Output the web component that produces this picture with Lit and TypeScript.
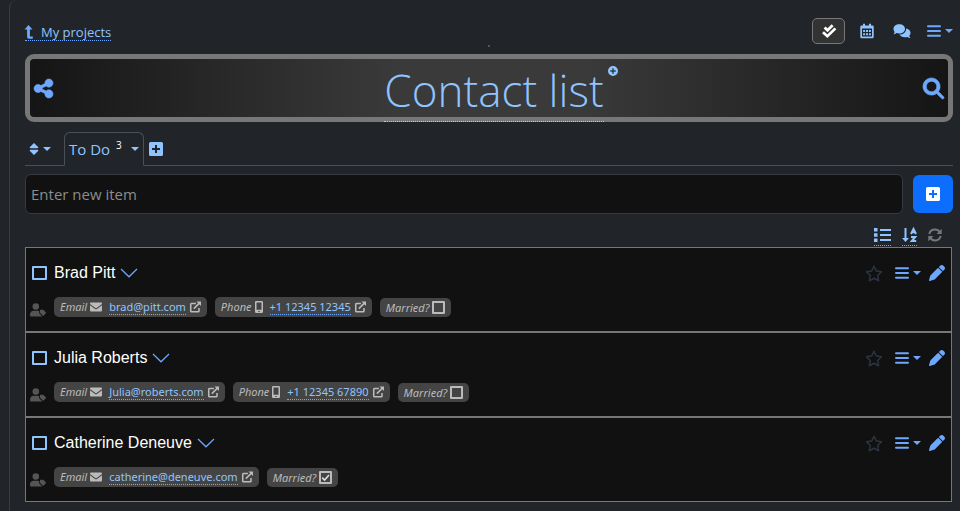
import { LitElement, html, css, svg, nothing } from "lit";
import { customElement, property } from "lit/decorators.js";

const shapes = {
  share: { box: "0 0 448 512", art: svg`<path stroke="currentColor" stroke-width="14" d="M352 224c53 0 96-43 96-96s-43-96-96-96s-96 43-96 96c0 4 .2 8 .7 11.9l-94.1 47C145.4 170.2 121.9 160 96 160c-53 0-96 43-96 96s43 96 96 96c25.9 0 49.4-10.2 66.6-26.9l94.1 47c-.5 3.9-.7 7.8-.7 11.9c0 53 43 96 96 96s96-43 96-96s-43-96-96-96c-25.9 0-49.4 10.2-66.6 26.9l-94.1-47c.5-3.9 .7-7.8 .7-11.9s-.2-8-.7-11.9l94.1-47C302.6 213.8 326.1 224 352 224z"/>` },
  search: { box: "0 0 512 512", art: svg`<path d="M416 208c0 45.9-14.9 88.3-40 122.7L502.6 457.4c12.5 12.5 12.5 32.8 0 45.3s-32.8 12.5-45.3 0L330.7 376c-34.4 25.2-76.8 40-122.7 40C93.1 416 0 322.9 0 208S93.1 0 208 0S416 93.1 416 208zM208 336a128 128 0 1 0 0-256 128 128 0 1 0 0 256z" stroke="currentColor" stroke-width="16"/>` },
  pencil: { box: "0 0 512 512", art: svg`<path d="M410.3 231l11.3-11.3-33.9-33.9-62.1-62.1L291.7 89.8l-11.3 11.3-22.6 22.6L58.6 322.9c-10.4 10.4-18 23.3-22.2 37.4L1 480.7c-2.5 8.4-.2 17.5 6.1 23.7s15.3 8.5 23.7 6.1l120.3-35.4c14.1-4.2 27-11.8 37.4-22.2L387.7 253.7 410.3 231zM362.7 18.7L348.3 33.2 325.7 55.8 314.3 67.1l33.9 33.9 62.1 62.1 33.9 33.9 11.3-11.3 22.6-22.6 14.5-14.5c25-25 25-65.5 0-90.5L453.3 18.7c-25-25-65.5-25-90.5 0z"/>` },
  star: { box: "0 0 576 512", art: svg`<path d="M287.9 0c9.2 0 17.6 5.2 21.6 13.5l68.6 141.3 153.2 22.6c9 1.3 16.5 7.6 19.3 16.3s.5 18.1-5.9 24.5L433.6 328.4l26.2 155.6c1.5 9-2.2 18.1-9.7 23.5s-17.3 6-25.3 1.7l-137-73.2L151 509.1c-8.1 4.3-17.9 3.7-25.3-1.7s-11.2-14.5-9.7-23.5l26.2-155.6L31.1 218.2c-6.5-6.4-8.7-15.9-5.9-24.5s10.3-14.9 19.3-16.3l153.2-22.6L266.3 13.5C270.4 5.2 278.7 0 287.9 0zm0 79L235.4 187.2c-3.5 7.1-10.2 12.1-18.1 13.3L99 217.9 184.9 303c5.5 5.5 8.1 13.3 6.8 21L171.4 443.7l105.2-56.2c7.1-3.8 15.6-3.8 22.6 0l105.2 56.2L384.2 324.1c-1.3-7.7 1.2-15.5 6.8-21l85.9-85.1L358.6 200.5c-7.8-1.2-14.6-6.1-18.1-13.3L287.9 79z"/>` },
  up: { box: "0 0 8 14", art: svg`<path d="M3.5 0 7.5 4.5H4.9V11.4H7.8V13.8H4Q2.1 13.8 2.1 12V4.5H-.5Z"/>` },
  checks: { box: "0 0 16 16", art: svg`<path d="M3.6 4.6 6.5 7.3 11.6 2.2M2 9.2 6.4 13.2 14.4 5.4" fill="none" stroke="currentColor" stroke-width="2.7"/>` },
  calendar: { box: "0 0 14 16", art: svg`<path fill-rule="evenodd" d="M3 .8H5V2.4H9V.8H11V2.4H12.5Q13.7 2.4 13.7 3.6V14Q13.7 15.2 12.5 15.2H1.5Q.3 15.2.3 14V3.6Q.3 2.4 1.5 2.4H3ZM2 5.6V13.5H12V5.6Z"/><path d="M3.1 7h2v2h-2zM6 7h2v2H6zM8.9 7h2v2h-2zM3.1 10.2h2v2h-2zM6 10.2h2v2H6zM8.9 10.2h2v2h-2z"/>` },
  chat: { box: "0 0 18 16", art: svg`<path d="M6.3 1.3C9.6 1.3 12 3.3 12 5.9S9.6 10.5 6.3 10.5C5.3 10.5 4.4 10.3 3.6 10 2.6 10.8 1.4 11.2.4 11.2 1 10.6 1.5 9.9 1.6 8.9.9 8.1.5 7 .5 5.9 .5 3.3 3 1.3 6.3 1.3Z"/><path d="M13 5.4C15.7 5.8 17.5 7.5 17.5 9.7 17.5 10.9 17 11.9 16.3 12.7 16.4 13.7 16.9 14.4 17.5 15 16.4 15 15.2 14.6 14.3 13.9 13.5 14.2 12.6 14.3 11.8 14.3 9.3 14.3 7.2 13.1 6.4 11.5 10.2 11.5 13.1 9 13.1 5.9Z"/>` },
  bars: { box: "0 0 14 14", art: svg`<path d="M1 1.3H13a1 1 0 0 1 0 2H1a1 1 0 0 1 0-2ZM1 6H13a1 1 0 0 1 0 2H1a1 1 0 0 1 0-2ZM1 10.7H13a1 1 0 0 1 0 2H1a1 1 0 0 1 0-2Z"/>` },
  caret: { box: "0 0 8 4", art: svg`<path d="M0 0H8L4 4Z"/>` },
  sort: { box: "0 0 10 12", art: svg`<path d="M5 0 9.3 4.3Q9.5 5.3 8.5 5.3H1.5Q.5 5.3.7 4.3ZM5 12 9.3 7.7Q9.5 6.7 8.5 6.7H1.5Q.5 6.7.7 7.7Z"/>` },
  plus: { box: "0 0 14 14", art: svg`<path fill-rule="evenodd" d="M1.5 0H12.5Q14 0 14 1.5V12.5Q14 14 12.5 14H1.5Q0 14 0 12.5V1.5Q0 0 1.5 0ZM6 3V6H3V8H6V11H8V8H11V6H8V3Z"/>` },
  roundPlus: { box: "0 0 10 10", art: svg`<path fill-rule="evenodd" d="M5 0A5 5 0 0 1 5 10A5 5 0 0 1 5 0ZM4.3 2.3V4.3H2.3V5.7H4.3V7.7H5.7V5.7H7.7V4.3H5.7V2.3Z"/>` },
  list: { box: "0 0 17 14", art: svg`<path d="M0 0H3.500V3.500H0ZM0 5.200H3.500V8.700H0ZM0 10.400H3.500V13.900H0ZM6 1H17V3H6ZM6 6H17V8H6ZM6 11H17V13H6Z"/>` },
  az: { box: "0 0 15 14", art: svg`<path d="M2.5 0H4.5V10H7L3.5 14 0 10H2.5Z"/><path fill="none" stroke="currentColor" stroke-width="2" d="M9 6 11.5 1 14 6M10 4.3H13M9 9H13.2L9.8 13H14.2"/>` },
  sync: { box: "0 0 14 14", art: svg`<path fill="none" stroke="currentColor" stroke-width="2" d="M1.3 6.1C1.9 3.2 4.2 1.6 7 1.6 9.3 1.6 11 2.7 12 4.5M12.7 7.9C12.1 10.8 9.8 12.4 7 12.4 4.7 12.4 3 11.3 2 9.5"/><path d="M13.7.8V6H8.5ZM.3 13.2V8H5.5Z"/>` },
  chevron: { box: "0 0 18 10", art: svg`<path fill="none" stroke="currentColor" stroke-width="1.2" d="M1 1 9 8.8 17 1"/>` },
  userTag: { box: "0 0 16 14", art: svg`<path d="M5.8.2a3.3 3.3 0 1 1 0 6.600a3.300 3.300 0 1 1 0-6.600ZM3.800 7.800H7.800Q9 7.800 9.200 8V10.300L12.300 13.500H1Q0 13.500 0 12.500V11.500Q.2 8 3.800 7.800ZM10.600 6.800H13.200L15.800 9.200Q16.200 9.700 15.800 10.200L13.700 12.500Q13.200 13 12.700 12.500L10 9.800V7.400Q10 6.800 10.600 6.800Z"/>` },
  mail: { box: "0 0 12 10", art: svg`<path d="M1 .5H11Q12 .5 12 1.5V2L6.6 6Q6 6.4 5.4 6L0 2V1.5Q0 .5 1 .5ZM0 3.2 5 6.9Q6 7.5 7 6.9L12 3.2V8.5Q12 9.5 11 9.5H1Q0 9.5 0 8.5Z"/>` },
  phone: { box: "0 0 8 12", art: svg`<path fill-rule="evenodd" d="M1.3 0H6.7Q8 0 8 1.3V10.7Q8 12 6.7 12H1.3Q0 12 0 10.7V1.3Q0 0 1.3 0ZM1.5 1.5V8.8H6.5V1.5ZM3.3 9.9V11H4.7V9.9Z"/>` },
  external: { box: "0 0 12 12", art: svg`<path fill="none" stroke="currentColor" stroke-width="1.7" d="M6.5 2.2H1.6Q.8 2.2.8 3V10.4Q.8 11.2 1.6 11.2H9Q9.8 11.2 9.8 10.4V7M4.2 7.8 10 2"/><path d="M7 0H12V5Z"/>` },
  tick: { box: "0 0 13 13", art: svg`<path fill="none" stroke="currentColor" stroke-width="1.6" d="M3.2 6.6 5.6 9 10 4"/>` },
};
type Shape = keyof typeof shapes;

interface Contact {
  name: string;
  email: string;
  phone?: string;
  married: boolean;
}

const contacts: Contact[] = [
  { name: "Brad Pitt", email: "brad@pitt.com", phone: "+1 12345 12345", married: false },
  { name: "Julia Roberts", email: "Julia@roberts.com", phone: "+1 12345 67890", married: false },
  { name: "Catherine Deneuve", email: "catherine@deneuve.com", married: true },
];

const controls = css`
  * { box-sizing: border-box; }
  button {
    display: inline-flex; align-items: center; justify-content: center; gap: 4px;
    padding: 0; border: 0; background: none; color: inherit; font: inherit; cursor: pointer;
  }
  a { color: #90c4ff; text-decoration: none; }
  .check { appearance: none; flex: none; margin: 0; border: 2px solid currentColor; border-radius: 1px; color: inherit; }
`;

@customElement("ui-icon")
export class UiIcon extends LitElement {
  static styles = css`
    :host { display: inline-flex; flex: none; }
    svg { width: 100%; height: 100%; fill: currentColor; overflow: visible; }
  `;
  @property() name: Shape = "bars";
  render() {
    const s = shapes[this.name];
    return html`<svg viewBox=${s.box} aria-hidden="true">${s.art}</svg>`;
  }
}

@customElement("contact-row")
export class ContactRow extends LitElement {
  static styles = [controls, css`
    :host {
      display: flex; flex-direction: column; gap: 14px; box-sizing: border-box; min-height: 85px; padding: 15px 6px 14px 4px;
      border: 1px solid #777; background: #111; color: #6ea8fe;
    }
    .head { display: flex; align-items: center; height: 20px; }
    .done { width: 15px; height: 14px; margin: 0 7px 0 2px; color: #90c4ff; }
    .name { color: #fff; font: 16px/20px "Liberation Sans", Arial, sans-serif; }
    .open { margin-left: 5px; }
    .open ui-icon { width: 18px; height: 10px; }
    .actions { display: flex; align-items: center; margin-left: auto; }
    .star { color: #2b3440; margin-right: 12px; }
    .star ui-icon { width: 18px; height: 17px; }
    .menu { margin-right: 8px; gap: 4px; }
    .menu .b { width: 14px; height: 14px; }
    .caret { width: 8px; height: 4px; }
    .edit ui-icon { width: 16px; height: 16px; }
    .fields { display: flex; align-items: flex-end; gap: 8px; height: 20px; font: 11px/20px "Noto Sans", sans-serif; }
    .tag { width: 16px; height: 14px; color: #555; }
    .chip {
      display: flex; align-items: center; height: 20px; padding: 0 6px;
      border-radius: 5px; background: #444; color: #bbb; white-space: nowrap;
    }
    .chip em { margin-right: 3px; }
    .chip a { line-height: 14px; border-bottom: 1px dotted #6ea8fe; margin: 0 4px 0 7px; }
    .mail { width: 12px; height: 10px; }
    .phone { width: 8px; height: 12px; }
    .out { width: 11px; height: 12px; }
    .chip.married { height: 19px; }
    .box { display: grid; }
    .box > * { grid-area: 1 / 1; width: 13px; height: 13px; }
    .box ui-icon { color: #ddd; pointer-events: none; }
  `];
  @property({ attribute: false }) contact!: Contact;

  render() {
    const c = this.contact;
    return html`
      <div class="head">
        <input class="check done" id="done" type="checkbox">
        <label class="name" for="done">${c.name}</label>
        <button class="open" aria-label="Show details"><ui-icon name="chevron"></ui-icon></button>
        <div class="actions">
          <button class="star" aria-label="Favourite"><ui-icon name="star"></ui-icon></button>
          <button class="menu" aria-label="Item menu"><ui-icon class="b" name="bars"></ui-icon><ui-icon class="caret" name="caret"></ui-icon></button>
          <button class="edit" aria-label="Edit"><ui-icon name="pencil"></ui-icon></button>
        </div>
      </div>
      <div class="fields">
        <ui-icon class="tag" name="userTag"></ui-icon>
        <span class="chip"><em>Email</em><ui-icon class="mail" name="mail"></ui-icon>
          <a href="mailto:${c.email}">${c.email}</a><ui-icon class="out" name="external"></ui-icon></span>
        ${c.phone ? html`<span class="chip"><em>Phone</em><ui-icon class="phone" name="phone"></ui-icon>
          <a href="tel:${c.phone}">${c.phone}</a><ui-icon class="out" name="external"></ui-icon></span>` : nothing}
        <label class="chip married"><em>Married?</em>
          <span class="box"><input class="check" type="checkbox" .checked=${c.married}>
            ${c.married ? html`<ui-icon name="tick"></ui-icon>` : nothing}
          </span></label>
      </div>`;
  }
}

@customElement("app-root")
export class AppRoot extends LitElement {
  static styles = [controls, css`
    :host {
      display: block; min-height: 100vh; padding-left: 9px; box-sizing: border-box;
      background: #212529; color: #90c4ff; font: 14px/20px "Open Sans", sans-serif;
    }
    .panel {
      min-height: 100vh; padding: 17px 7px 9px 15px;
      border-left: 1px solid #3a3e42; border-top-left-radius: 8px;
    }
    .top { display: grid; grid-template-columns: 1fr auto 1fr; height: 37px; }
    .back { display: flex; justify-self: start; align-items: center; gap: 8px; height: 18px; margin-top: 6px; font-size: 13px; border-bottom: 1px dotted #6ea8fe; }
    .back ui-icon { width: 8px; height: 14px; color: #6ea8fe; }
    .dot { align-self: end; width: 2px; height: 2px; margin-bottom: 7px; background: #555; }
    .tools { display: flex; justify-self: end; align-items: center; height: 28px; }
    .tools .active { width: 33px; height: 26px; margin-right: 15px; border: 1px solid #777; border-radius: 5px; background: #333; color: #fff; }
    .i14 { width: 14px; height: 14px; }
    .i16 { width: 16px; height: 16px; }
    .cal { margin-right: 19px; }
    .cal ui-icon { width: 14px; height: 16px; }
    .chat { margin-right: 16px; }
    .chat ui-icon { width: 18px; height: 16px; }
    .blue { color: #6ea8fe; }
    .caret { width: 8px; height: 4px; }
    .banner {
      display: grid; grid-template-columns: 1fr auto 1fr; align-items: center; height: 68px; padding: 0 4px;
      border: 5px solid #777; border-radius: 9px;
      background: linear-gradient(90deg, #151515, #3a3a3a 40%, #3a3a3a 60%, #151515);
    }
    .search { justify-self: end; color: #6ea8fe; }
    .share { justify-self: start; color: #6ea8fe; }
    .share ui-icon { width: 19px; height: 23px; }
    .search ui-icon { width: 21px; height: 21px; }
    h1 { position: relative; margin: 0 0 0 10px; height: 58px; font: 300 44px/62px "Open Sans", sans-serif; }
    h1 a { display: block; border-bottom: 1px dotted #b7cbe0; }
    h1 button { position: absolute; left: 100%; top: 7px; margin-left: 4px; }
    h1 ui-icon { width: 10px; height: 10px; }
    .tabs { display: flex; align-items: center; height: 34px; margin-top: 10px; border-bottom: 1px solid #495057; }
    .sort { width: 39px; justify-content: flex-start; padding-left: 4px; gap: 4px; }
    .sort .s { width: 10px; height: 12px; }
    .tab { align-self: stretch; display: flex; align-items: center; width: 80px; height: 34px; padding: 0 4px; border: 1px solid #495057; border-bottom-color: #212529; border-radius: 6px 6px 0 0; background: #212529; font-size: 15px; }
    .tab sup { align-self: flex-start; margin: 6px 0 0 6px; color: #fff; font-size: 10px; line-height: 12px; }
    .tab .caret { margin-left: auto; }
    .newtab { margin-left: 5px; }
    .entry { display: grid; grid-template-columns: 1fr 40px; gap: 10px; margin-top: 8px; }
    .entry input { width: 100%; height: 40px; padding: 0 5px; border: 1px solid #343a40; border-radius: 6px; outline: 0; background: #111; color: #fff; font: 15px/24px "Open Sans", sans-serif; }
    .entry input::placeholder { color: #8c8c8c; opacity: 1; }
    .entry button { height: 38px; margin-top: 1px; border-radius: 6px; background: #0d6efd; color: #fff; }
    .view { display: flex; justify-content: flex-end; gap: 11px; height: 33px; padding: 13px 11px 0 0; }
    .view button { height: 19px; padding-bottom: 2px; border-bottom: 1px dotted #6ea8fe; }
    .view .refresh { border-color: transparent; color: #777; }
    .view .l { width: 17px; height: 14px; }
    .view .a { width: 15px; height: 14px; }
    .items { margin: 0 1px 0 0; padding: 0; list-style: none; }
  `];

  render() {
    return html`<main class="panel">
      <nav class="top">
        <a class="back" href="#projects"><ui-icon name="up"></ui-icon>My projects</a>
        <span class="dot"></span>
        <div class="tools">
          <button class="active" aria-label="Lists"><ui-icon class="i16" name="checks"></ui-icon></button>
          <button class="cal" aria-label="Calendar"><ui-icon name="calendar"></ui-icon></button>
          <button class="chat" aria-label="Chat"><ui-icon name="chat"></ui-icon></button>
          <button class="blue" aria-label="Menu"><ui-icon class="i14" name="bars"></ui-icon><ui-icon class="caret" name="caret"></ui-icon></button>
        </div>
      </nav>
      <header class="banner">
        <button class="share" aria-label="Share"><ui-icon name="share"></ui-icon></button>
        <h1><a href="#list">Contact list</a><button aria-label="Add"><ui-icon name="roundPlus"></ui-icon></button></h1>
        <button class="search" aria-label="Search"><ui-icon name="search"></ui-icon></button>
      </header>
      <div class="tabs">
        <button class="sort" aria-label="Sort lists"><ui-icon class="s" name="sort"></ui-icon><ui-icon class="caret" name="caret"></ui-icon></button>
        <a class="tab" href="#todo">To Do<sup>3</sup><ui-icon class="caret" name="caret"></ui-icon></a>
        <button class="newtab" aria-label="New list"><ui-icon class="i14" name="plus"></ui-icon></button>
      </div>
      <form class="entry">
        <input type="text" placeholder="Enter new item" aria-label="Enter new item">
        <button type="button" aria-label="Add item"><ui-icon class="i14" name="plus"></ui-icon></button>
      </form>
      <div class="view">
        <button aria-label="View"><ui-icon class="l" name="list"></ui-icon></button>
        <button aria-label="Sort A to Z"><ui-icon class="a" name="az"></ui-icon></button>
        <button class="refresh" aria-label="Refresh"><ui-icon class="i14" name="sync"></ui-icon></button>
      </div>
      <ul class="items">${contacts.map((c) => html`<li><contact-row .contact=${c}></contact-row></li>`)}</ul>
    </main>`;
  }
}
